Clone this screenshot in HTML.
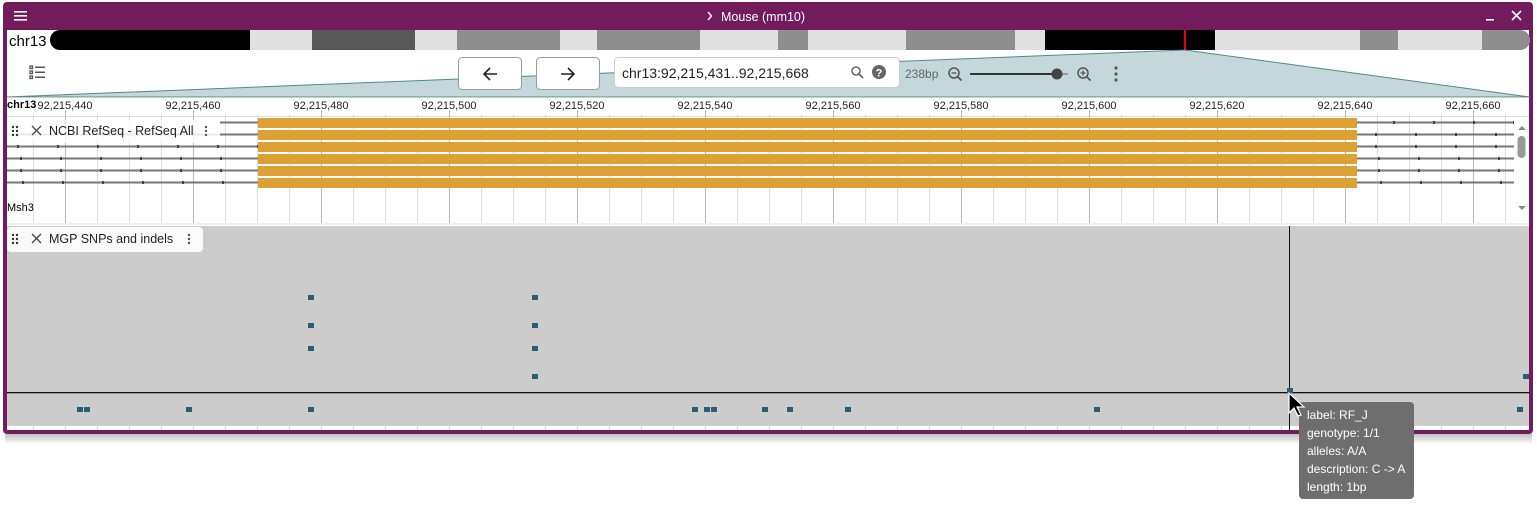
<!DOCTYPE html>
<html><head><meta charset="utf-8"><style>
html,body{margin:0;padding:0;background:#fff;width:1537px;height:511px;overflow:hidden}
svg{display:block}
text{font-family:"Liberation Sans",sans-serif}
</style></head><body>
<svg width="1537" height="511" viewBox="0 0 1537 511" xmlns="http://www.w3.org/2000/svg">
<defs>
<pattern id="minor" patternUnits="userSpaceOnUse" width="32" height="10" x="1">
<rect x="0" y="0" width="1" height="10" fill="#dcdcdc"/></pattern>
<pattern id="major" patternUnits="userSpaceOnUse" width="128" height="10" x="65">
<rect x="0" y="0" width="1" height="10" fill="#b8b8b8"/></pattern>
<linearGradient id="sh" x1="0" y1="0" x2="0" y2="1"><stop offset="0" stop-color="#000" stop-opacity=".25"/><stop offset="1" stop-color="#000" stop-opacity="0"/></linearGradient>
</defs>
<!-- shadow -->
<rect x="5" y="434" width="1527" height="10" fill="url(#sh)"/>
<!-- frame -->
<rect x="3" y="2" width="1530" height="432" rx="4" fill="#721c5e"/>
<rect x="7" y="30" width="1522" height="400" fill="#fff"/>
<!-- header -->
<rect x="14" y="11" width="13" height="1.6" fill="#fff"/><rect x="14" y="15" width="13" height="1.6" fill="#fff"/><rect x="14" y="19" width="13" height="1.6" fill="#fff"/>
<path d="M708 12l3.5 4-3.5 4" stroke="#fff" stroke-width="1.4" fill="none"/>
<text x="721" y="21" font-size="12.5" fill="#fff">Mouse (mm10)</text>
<rect x="1486" y="19" width="8" height="1.6" fill="#fff"/>
<path d="M1512 11l9 9M1521 11l-9 9" stroke="#fff" stroke-width="1.6"/>
<!-- chromosome -->
<text x="9" y="46" font-size="15" fill="#000">chr13</text>
<rect x="50" y="30" width="1480" height="20" rx="10" fill="#e0e0e0"/>
<path d="M60 30H250V50H60A10 10 0 0 1 60 30Z" fill="#000"/>
<rect x="312" y="30" width="103" height="20" fill="#585858"/>
<rect x="457" y="30" width="103" height="20" fill="#8e8e8e"/>
<rect x="597" y="30" width="103" height="20" fill="#8e8e8e"/>
<rect x="778" y="30" width="30" height="20" fill="#8e8e8e"/>
<rect x="906" y="30" width="109" height="20" fill="#8e8e8e"/>
<rect x="1045" y="30" width="170" height="20" fill="#000"/>
<rect x="1360" y="30" width="38" height="20" fill="#8e8e8e"/>
<path d="M1482 30H1520A10 10 0 0 1 1520 50H1482Z" fill="#8e8e8e"/>
<rect x="1184" y="30" width="2" height="20" fill="#e00"/>
<!-- overview poly -->
<path d="M7 97L1185 50L1530 97Z" fill="#c4d7da" stroke="#4c8b91" stroke-width="1"/>
<!-- list icon -->
<g fill="none" stroke="#555" stroke-width="1.3"><rect x="30" y="66" width="2.5" height="2.5"/><rect x="30" y="71" width="2.5" height="2.5"/><rect x="30" y="76" width="2.5" height="2.5"/></g>
<g fill="#555"><rect x="35" y="66.5" width="10" height="1.5"/><rect x="35" y="71.5" width="10" height="1.5"/><rect x="35" y="76.5" width="10" height="1.5"/></g>
<!-- nav buttons -->
<rect x="458.5" y="57.5" width="63" height="32" rx="4" fill="#fff" stroke="#999"/>
<path d="M497 74H484M490 68l-6 6 6 6" stroke="#222" stroke-width="1.6" fill="none"/>
<rect x="536.5" y="57.5" width="63" height="32" rx="4" fill="#fff" stroke="#999"/>
<path d="M561 74H574M568 68l6 6-6 6" stroke="#222" stroke-width="1.6" fill="none"/>
<rect x="614.5" y="57.5" width="285" height="30" rx="4" fill="#fff" stroke="#ccc"/>
<text x="622" y="78" font-size="14" fill="#222">chr13:92,215,431..92,215,668</text>
<circle cx="856" cy="71" r="4" fill="none" stroke="#666" stroke-width="1.5"/><path d="M859 74l4 4" stroke="#666" stroke-width="1.8"/>
<circle cx="879" cy="72" r="7" fill="#666"/><text x="879" y="76.5" font-size="11" font-weight="bold" fill="#fff" text-anchor="middle">?</text>
<text x="905" y="78" font-size="12" fill="#666">238bp</text>
<circle cx="954" cy="73" r="5" fill="none" stroke="#555" stroke-width="1.5"/><path d="M957.5 76.5l4 4" stroke="#555" stroke-width="1.8"/><path d="M951.5 73h5" stroke="#555" stroke-width="1.3"/>
<rect x="970" y="73" width="88" height="2" fill="#333"/><rect x="1058" y="73" width="10" height="2" fill="#999"/>
<circle cx="1057" cy="74" r="5.5" fill="#444"/>
<circle cx="1083" cy="73" r="5" fill="none" stroke="#555" stroke-width="1.5"/><path d="M1086.5 76.5l4 4" stroke="#555" stroke-width="1.8"/><path d="M1080.5 73h5M1083 70.5v5" stroke="#555" stroke-width="1.3"/>
<circle cx="1116" cy="68" r="1.6" fill="#555"/><circle cx="1116" cy="74" r="1.6" fill="#555"/><circle cx="1116" cy="80" r="1.6" fill="#555"/>
<!-- ruler & grid -->
<rect x="7" y="97" width="1522" height="1" fill="#ccc"/>
<rect x="7" y="98" width="1522" height="127" fill="url(#minor)"/>
<rect x="7" y="98" width="1522" height="127" fill="url(#major)"/>
<rect x="7" y="98" width="1522" height="16" fill="#fff"/>
<rect x="7" y="116" width="1522" height="1" fill="#ddd"/>
<g font-size="11" fill="#222" text-anchor="middle">
<text x="65" y="109">92,215,440</text><text x="193" y="109">92,215,460</text><text x="321" y="109">92,215,480</text><text x="449" y="109">92,215,500</text><text x="577" y="109">92,215,520</text><text x="705" y="109">92,215,540</text><text x="833" y="109">92,215,560</text><text x="961" y="109">92,215,580</text><text x="1089" y="109">92,215,600</text><text x="1217" y="109">92,215,620</text><text x="1345" y="109">92,215,640</text><text x="1473" y="109">92,215,660</text></g>
<g fill="#bbb"><rect x="65" y="110" width="1" height="7"/><rect x="193" y="110" width="1" height="7"/><rect x="321" y="110" width="1" height="7"/><rect x="449" y="110" width="1" height="7"/><rect x="577" y="110" width="1" height="7"/><rect x="705" y="110" width="1" height="7"/><rect x="833" y="110" width="1" height="7"/><rect x="961" y="110" width="1" height="7"/><rect x="1089" y="110" width="1" height="7"/><rect x="1217" y="110" width="1" height="7"/><rect x="1345" y="110" width="1" height="7"/><rect x="1473" y="110" width="1" height="7"/></g>
<rect x="7" y="98" width="30" height="14" fill="#fff"/>
<text x="7" y="108" font-size="11" font-weight="bold" fill="#000">chr13</text>
<!-- introns -->
<g stroke="#777" stroke-width="2">
<path d="M220 122.5H258M7 134.5H258M7 146.5H258M7 158.5H258M7 170.5H258M7 182.5H258"/>
<path d="M1357 122.5H1514M1357 134.5H1514M1357 146.5H1514M1357 158.5H1514M1357 170.5H1514M1357 182.5H1514"/>
</g>
<g stroke="#444" stroke-width="3" stroke-dasharray="2 38">
<path d="M17 146.5H258M20 158.5H258M20 170.5H258M22 182.5H258"/>
<path d="M1393 122.5H1514M1375 134.5H1514M1375 146.5H1514M1378 158.5H1514M1378 170.5H1514M1380 182.5H1514"/>
</g>
<g fill="#dca035"><rect x="258" y="118" width="1099" height="10"/><rect x="258" y="130" width="1099" height="10"/><rect x="258" y="142" width="1099" height="10"/><rect x="258" y="154" width="1099" height="10"/><rect x="258" y="166" width="1099" height="10"/><rect x="258" y="178" width="1099" height="10"/></g>
<text x="7" y="211" font-size="11" fill="#000">Msh3</text>
<!-- scrollbar -->
<rect x="1515" y="117" width="14" height="106" fill="#fff" opacity=".9"/>
<path d="M1518 130l4-4 4 4Z" fill="#888"/><path d="M1518 206l4 4 4-4Z" fill="#888"/>
<rect x="1517.5" y="136" width="8" height="22" rx="4" fill="#999"/>
<!-- track label 1 -->
<rect x="7" y="120" width="213" height="23" rx="4" fill="#fff" opacity=".85"/>
<g fill="#333"><circle cx="13" cy="127" r="1.2"/><circle cx="17" cy="127" r="1.2"/><circle cx="13" cy="131" r="1.2"/><circle cx="17" cy="131" r="1.2"/><circle cx="13" cy="135" r="1.2"/><circle cx="17" cy="135" r="1.2"/></g>
<path d="M32 126l9 9M41 126l-9 9" stroke="#444" stroke-width="1.3"/>
<text x="49" y="135" font-size="12.5" fill="#222">NCBI RefSeq - RefSeq All</text>
<g fill="#555"><circle cx="206" cy="127" r="1.2"/><circle cx="206" cy="131" r="1.2"/><circle cx="206" cy="135" r="1.2"/></g>
<!-- SNP track -->
<rect x="7" y="223" width="1522" height="2" fill="#eee"/>
<rect x="7" y="226" width="1522" height="200" fill="#cccccc"/>
<rect x="7" y="426" width="1522" height="4" fill="url(#minor)"/>
<rect x="7" y="392" width="1523" height="1.3" fill="#111"/>
<rect x="1289" y="226" width="1" height="204" fill="#111"/>
<g fill="#2a5d78">
<rect x="308" y="295" width="6" height="5"/><rect x="308" y="323" width="6" height="5"/><rect x="308" y="346" width="6" height="5"/>
<rect x="532" y="295" width="6" height="5"/><rect x="532" y="323" width="6" height="5"/><rect x="532" y="346" width="6" height="5"/><rect x="532" y="374" width="6" height="5"/>
<rect x="1523" y="374" width="6" height="5"/><rect x="1287" y="388" width="6" height="5"/>
<rect x="77" y="407" width="6" height="5"/><rect x="84" y="407" width="6" height="5"/><rect x="186" y="407" width="6" height="5"/><rect x="308" y="407" width="6" height="5"/><rect x="692" y="407" width="6" height="5"/><rect x="704" y="407" width="6" height="5"/><rect x="711" y="407" width="6" height="5"/><rect x="762" y="407" width="6" height="5"/><rect x="787" y="407" width="6" height="5"/><rect x="845" y="407" width="6" height="5"/><rect x="1094" y="407" width="6" height="5"/><rect x="1517" y="407" width="6" height="5"/>
</g>
<rect x="7" y="227" width="196" height="25" rx="4" fill="#fff" opacity=".9"/>
<g fill="#333"><circle cx="13" cy="235" r="1.2"/><circle cx="17" cy="235" r="1.2"/><circle cx="13" cy="239" r="1.2"/><circle cx="17" cy="239" r="1.2"/><circle cx="13" cy="243" r="1.2"/><circle cx="17" cy="243" r="1.2"/></g>
<path d="M32 234l9 9M41 234l-9 9" stroke="#444" stroke-width="1.3"/>
<text x="49" y="243" font-size="12.5" fill="#222">MGP SNPs and indels</text>
<g fill="#555"><circle cx="189" cy="235" r="1.2"/><circle cx="189" cy="239" r="1.2"/><circle cx="189" cy="243" r="1.2"/></g>
<!-- tooltip -->
<rect x="1299" y="402" width="115" height="97" rx="4" fill="#6e6e6e"/>
<g font-size="12" fill="#fff"><text x="1307" y="419">label: RF_J</text><text x="1307" y="437">genotype: 1/1</text><text x="1307" y="455">alleles: A/A</text><text x="1307" y="473">description: C -&gt; A</text><text x="1307" y="491">length: 1bp</text></g>
<!-- cursor -->
<path d="M1289 393V413L1294 408L1298 416L1301 415L1297 407L1304 407Z" fill="#000" stroke="#fff" stroke-width="1.2"/>
</svg>
</body></html>
